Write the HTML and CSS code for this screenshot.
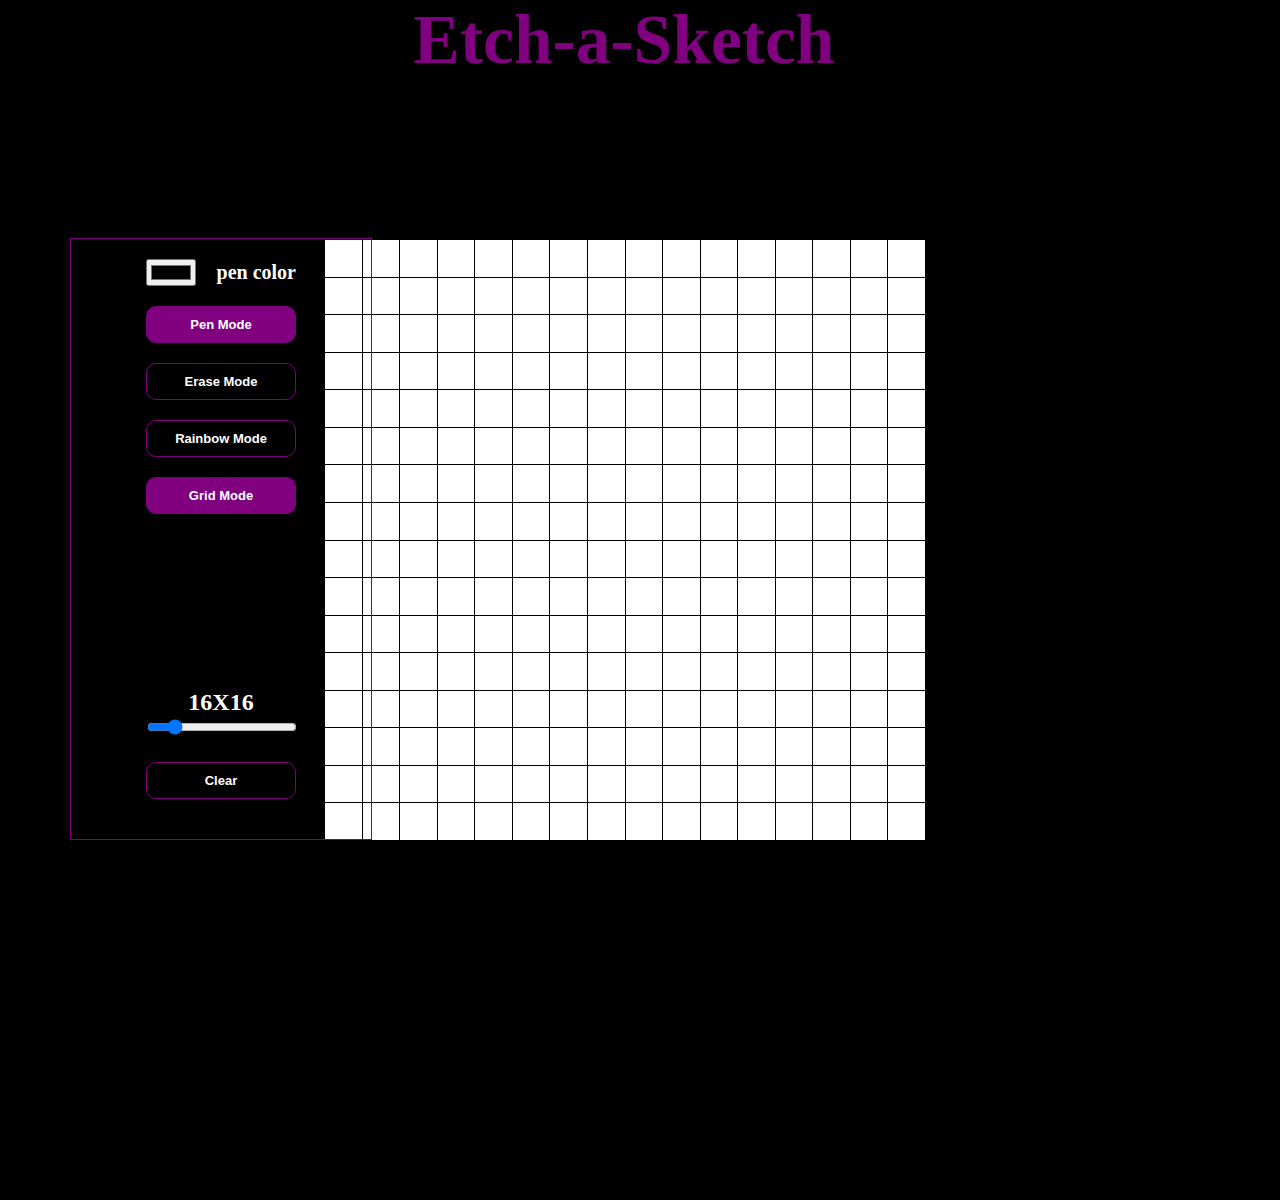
FILE: index.html
```html
<!DOCTYPE html>
<html>
<head>
<meta charset="utf-8">
<title>Etch-a-Sketch</title>
<link rel="stylesheet" href="styles.css">
</head>
<body>
<h1 class="title">Etch-a-Sketch</h1>
<main class="board">
  <aside class="panel">
    <div class="pen-row">
      <input class="pen-color" type="color" value="#000000">
      <span class="pen-label">pen color</span>
    </div>
    <button class="btn btn-active">Pen Mode</button>
    <button class="btn">Erase Mode</button>
    <button class="btn">Rainbow Mode</button>
    <button class="btn btn-active">Grid Mode</button>
    <div class="size-label">16X16</div>
    <input class="size-slider" type="range" min="1" max="100" value="16">
    <button class="btn btn-clear">Clear</button>
  </aside>
  <section class="grid" id="grid"></section>
</main>
<script>
  var g = document.getElementById('grid');
  for (var i = 0; i < 256; i++) {
    var c = document.createElement('div');
    c.className = 'cell';
    g.appendChild(c);
  }
</script>
</body>
</html>
```

FILE: styles.css
```css
html, body {
  margin: 0;
  padding: 0;
  background: #000;
}

body {
  min-height: 1200px;
}

.title {
  margin: 0;
  padding-right: 32px;
  font-family: "Liberation Serif", "Times New Roman", serif;
  font-weight: bold;
  font-size: 69.5px;
  line-height: 80px;
  color: #800080;
  text-align: center;
}

.board {
  display: flex;
  align-items: flex-start;
  margin-top: 158px;
  padding-left: 70px;
}

.panel {
  position: relative;
  z-index: 1;
  box-sizing: content-box;
  width: 300px;
  height: 580px;
  padding-top: 20px;
  border: 1px solid #800080;
  display: flex;
  flex-direction: column;
  align-items: center;
}

.pen-row {
  width: 150px;
  height: 27px;
  display: flex;
  align-items: center;
  justify-content: space-between;
}

.pen-color {
  width: 50px;
  height: 27px;
  margin: 0;
}

.pen-label {
  font-family: "Liberation Serif", "Times New Roman", serif;
  font-weight: bold;
  font-size: 20px;
  color: #fff;
}

.btn {
  box-sizing: border-box;
  width: 150px;
  height: 37px;
  margin-top: 20px;
  border: 1px solid #800080;
  border-radius: 10px;
  background: #000;
  color: #fff;
  font-family: "Liberation Sans", Arial, sans-serif;
  font-weight: bold;
  font-size: 13px;
  padding: 0;
}

.btn-active {
  background: #800080;
}

.size-label {
  margin-top: 174px;
  font-family: "Liberation Serif", "Times New Roman", serif;
  font-weight: bold;
  font-size: 24px;
  line-height: 28px;
  color: #fff;
}

.size-slider {
  width: 150px;
  margin: 3px 0 0 2px;
}

.btn-clear {
  margin-top: 27px;
}

.grid {
  margin-left: -47px;
  margin-top: 2px;
  width: 600px;
  height: 600px;
  display: grid;
  grid-template-columns: repeat(16, 1fr);
  grid-template-rows: repeat(16, 1fr);
  gap: 1px;
  background: #000;
}

.cell {
  background: #fff;
}
```
